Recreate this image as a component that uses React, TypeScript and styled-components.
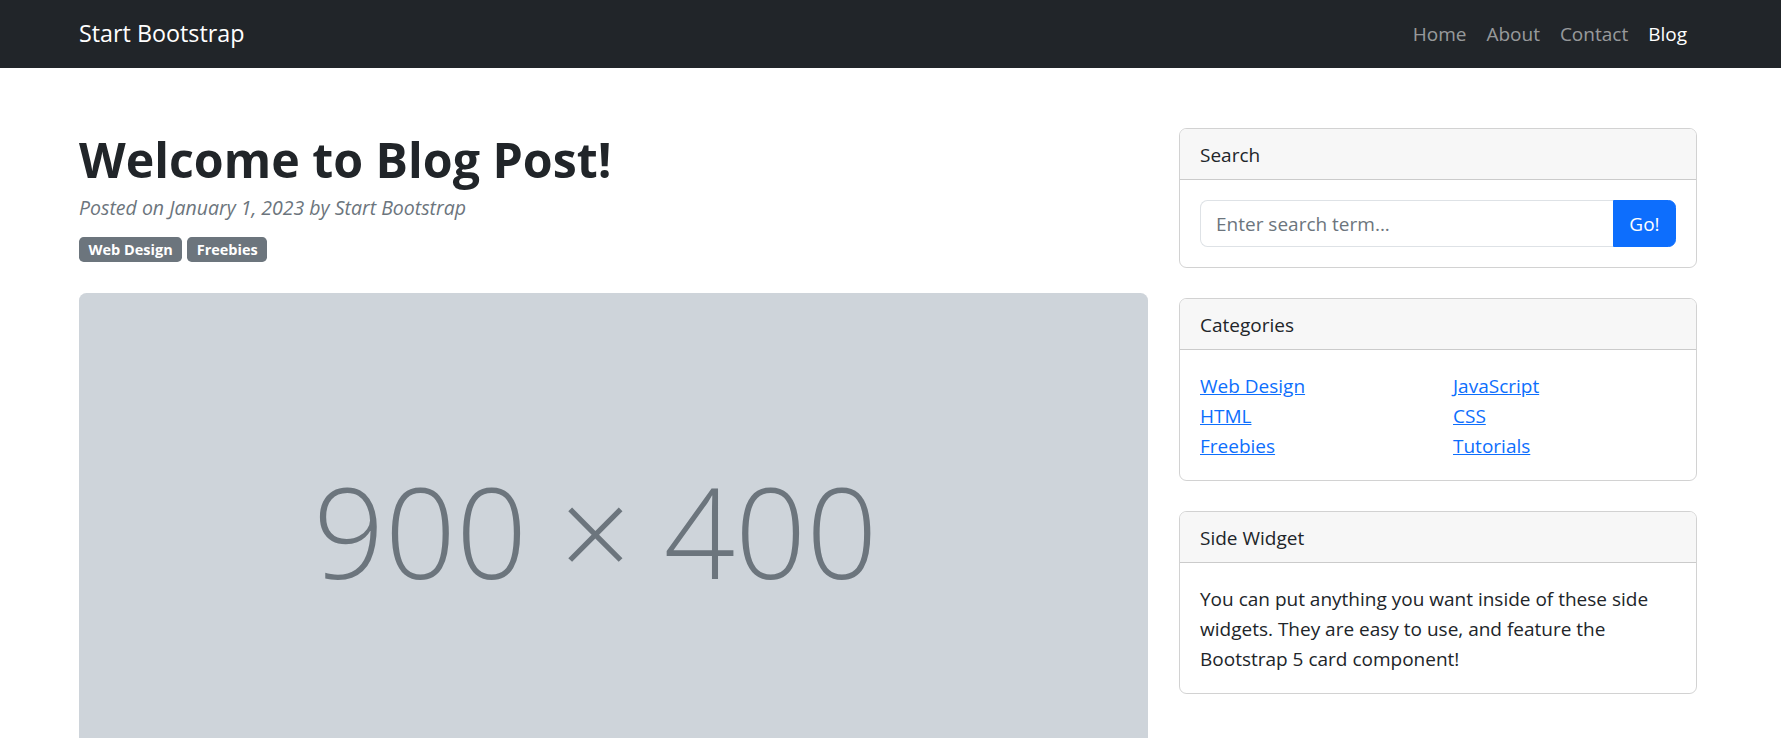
import React from "react";
import styled, { createGlobalStyle } from "styled-components";

const GlobalStyle = createGlobalStyle`
  *, *::before, *::after { box-sizing: border-box; }
  body {
    margin: 0;
    font-family: "Open Sans", "Noto Sans", "Liberation Sans", sans-serif;
    font-size: 19px;
    line-height: 30px;
    color: #212529;
    background: #fff;
  }
`;

const Container = styled.div`
  padding: 0 84px 0 79px;
`;

const NavBar = styled.nav`
  background: #212529;
  height: 68px;
`;

const NavInner = styled(Container)`
  height: 100%;
  display: flex;
  align-items: center;
  justify-content: space-between;
`;

const Brand = styled.a`
  color: #fff;
  font-size: 23.3px;
  line-height: 30px;
  text-decoration: none;
  padding-bottom: 2px;
`;

const NavList = styled.ul`
  display: flex;
  list-style: none;
  margin: 0;
  padding: 0;
`;

const NavLink = styled.a<{ $active?: boolean }>`
  display: block;
  padding: 0 10px;
  font-size: 19px;
  line-height: 30px;
  text-decoration: none;
  color: ${(p) => (p.$active ? "#fff" : "rgba(255,255,255,0.55)")};
`;

const Main = styled(Container)`
  margin-top: 60px;
  display: grid;
  grid-template-columns: 1069px 518px;
  column-gap: 31px;
  align-items: start;
`;

const Article = styled.article``;

const PostHeader = styled.header`
  margin-bottom: 30px;
`;

const Title = styled.h1`
  margin: 0 0 5px;
  padding-top: 1px;
  height: 60px;
  font-size: 48.3px;
  line-height: 60px;
  font-weight: 700;
  color: #212529;
`;

const Meta = styled.div`
  color: #6c757d;
  font-style: italic;
  font-size: 19.5px;
  line-height: 30px;
  margin-bottom: 10px;
`;

const BadgeRow = styled.div`
  line-height: 30px;
`;

const Badge = styled.a`
  display: inline-block;
  padding: 5.5px 9.5px 4.5px;
  margin-right: 5px;
  font-size: 14.5px;
  font-weight: 700;
  line-height: 15px;
  color: #fff;
  background: #6c757d;
  border-radius: 4.7px;
  text-decoration: none;
  vertical-align: baseline;
`;

const Placeholder = styled.div`
  height: 475px;
  border-radius: 7.5px;
  background: #ced4da;
  display: flex;
  align-items: center;
  justify-content: center;
  padding-right: 36px;
  color: #6c757d;
  font-family: "Open Sans", "Noto Sans", sans-serif;
  font-weight: 300;
  font-size: 125px;
  line-height: 1;
`;

const Sidebar = styled.aside`
  display: flex;
  flex-direction: column;
  gap: 30px;
`;

const Card = styled.section`
  border: 1px solid rgba(0, 0, 0, 0.175);
  border-radius: 7.5px;
  overflow: hidden;
`;

const CardHeader = styled.div`
  background: #f7f7f7;
  border-bottom: 1px solid rgba(0, 0, 0, 0.175);
  padding: 11px 20px 9px;
  font-size: 19px;
  line-height: 30px;
`;

const CardBody = styled.div`
  padding: 21px 20px 19px;
  font-size: 19px;
  line-height: 30px;
`;

const InputGroup = styled.div`
  display: flex;
  height: 47px;
  margin-top: -1px;
  margin-bottom: 1px;
`;

const SearchInput = styled.input`
  flex: 1;
  min-width: 0;
  border: 1px solid #dee2e6;
  border-right: none;
  border-radius: 7.5px 0 0 7.5px;
  padding: 0 15px;
  font-family: inherit;
  font-size: 19px;
  color: #212529;
  outline: none;
  &::placeholder { color: #6c757d; }
`;

const GoButton = styled.button`
  width: 63px;
  border: 1px solid #0d6efd;
  background: #0d6efd;
  color: #fff;
  font-family: inherit;
  font-size: 19px;
  border-radius: 0 7.5px 7.5px 0;
  padding: 0;
`;

const CategoryGrid = styled.div`
  display: grid;
  grid-template-columns: 1fr 1fr;
  column-gap: 30px;
`;

const CategoryList = styled.ul`
  list-style: none;
  margin: 0;
  padding: 0;
`;

const CategoryLink = styled.a`
  color: #0d6efd;
  text-decoration: underline;
`;

const WidgetText = styled.p`
  margin: 0;
`;

export default function App() {
  return (
    <>
      <GlobalStyle />
      <NavBar>
        <NavInner>
          <Brand href="#!">Start Bootstrap</Brand>
          <NavList>
            <li><NavLink href="#">Home</NavLink></li>
            <li><NavLink href="#!">About</NavLink></li>
            <li><NavLink href="#!">Contact</NavLink></li>
            <li><NavLink $active href="#">Blog</NavLink></li>
          </NavList>
        </NavInner>
      </NavBar>
      <Main>
        <Article>
          <PostHeader>
            <Title>Welcome to Blog Post!</Title>
            <Meta>Posted on January 1, 2023 by Start Bootstrap</Meta>
            <BadgeRow>
              <Badge href="#!">Web Design</Badge>
              <Badge href="#!">Freebies</Badge>
            </BadgeRow>
          </PostHeader>
          <Placeholder>900 × 400</Placeholder>
        </Article>
        <Sidebar>
          <Card>
            <CardHeader>Search</CardHeader>
            <CardBody>
              <InputGroup>
                <SearchInput type="text" placeholder="Enter search term..." />
                <GoButton type="button">Go!</GoButton>
              </InputGroup>
            </CardBody>
          </Card>
          <Card>
            <CardHeader>Categories</CardHeader>
            <CardBody>
              <CategoryGrid>
                <CategoryList>
                  <li><CategoryLink href="#!">Web Design</CategoryLink></li>
                  <li><CategoryLink href="#!">HTML</CategoryLink></li>
                  <li><CategoryLink href="#!">Freebies</CategoryLink></li>
                </CategoryList>
                <CategoryList>
                  <li><CategoryLink href="#!">JavaScript</CategoryLink></li>
                  <li><CategoryLink href="#!">CSS</CategoryLink></li>
                  <li><CategoryLink href="#!">Tutorials</CategoryLink></li>
                </CategoryList>
              </CategoryGrid>
            </CardBody>
          </Card>
          <Card>
            <CardHeader>Side Widget</CardHeader>
            <CardBody>
              <WidgetText>
                You can put anything you want inside of these side widgets. They are easy to use, and feature the Bootstrap 5 card component!
              </WidgetText>
            </CardBody>
          </Card>
        </Sidebar>
      </Main>
    </>
  );
}
